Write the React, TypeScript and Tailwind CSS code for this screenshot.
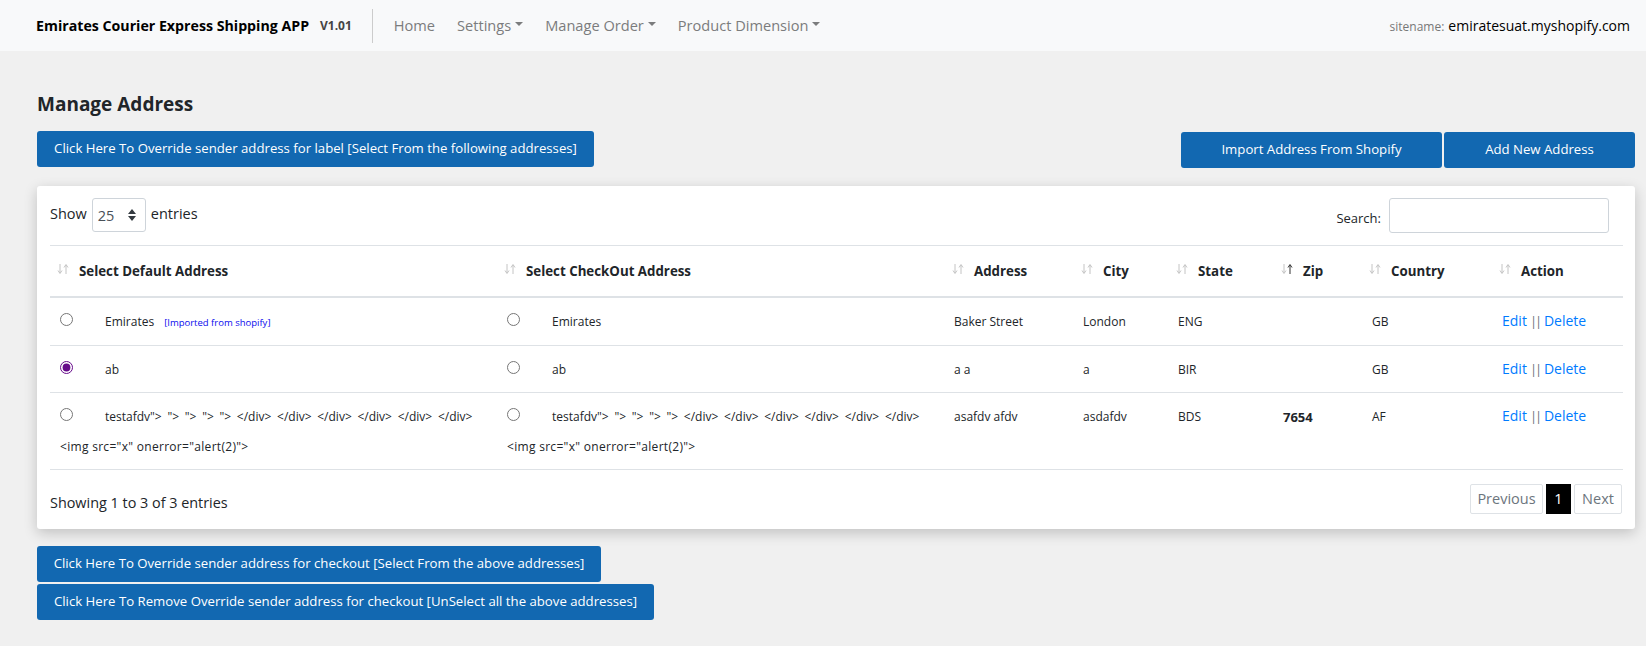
import React from "react";

function Caret() {
  return <span className="ml-[4px] inline-block h-0 w-0 translate-y-[-1px] border-x-[4px] border-t-[4px] border-x-transparent border-t-current" />;
}

function Btn({ children, className = "" }: { children: React.ReactNode; className?: string }) {
  return (
    <button className={"flex h-[36px] items-center justify-center rounded-[3px] bg-[#1268b1] text-[13.2px] text-white " + className}>
      {children}
    </button>
  );
}

function SortIcon({ active = false }: { active?: boolean }) {
  return (
    <svg viewBox="0 0 12 10" fill="none" strokeWidth="1" className="h-[10px] w-[12px] -translate-y-[3px]">
      <path d="M3 0V9M1 6.5 3 9.5 5 6.5" stroke="#c4c4c4" />
      <path d="M9 10V1M7 3.5 9 0.5 11 3.5" stroke={active ? "#333333" : "#c4c4c4"} />
    </svg>
  );
}

function Th({ label, active = false, pad = "pl-[9px]" }: { label: string; active?: boolean; pad?: string }) {
  return (
    <th className={"h-[51px] p-0 pt-[2px] text-left align-middle " + pad}>
      <div className="flex items-center text-[13.3px] font-bold text-[#212529]">
        <span className="w-[14px] shrink-0"><SortIcon active={active} /></span>
        <span className="ml-[8px]">{label}</span>
      </div>
    </th>
  );
}

const testName = `testafdv"> "> "> "> "> </div> </div> </div> </div> </div> </div>`;
const imgLine = `<img src="x" onerror="alert(2)">`;

function NameCell({ name, checked = false, extra, second }: { name: string; checked?: boolean; extra?: boolean; second?: string }) {
  return (
    <td className="px-[11px] pt-[15px] pb-[13px] align-top">
      <div className="flex items-start">
        <input type="radio" readOnly checked={checked} className="-ml-[1px] h-[13px] w-[13px] accent-[#660a8a]" />
        <span className="ml-[32px] leading-[18px] whitespace-nowrap [word-spacing:2.6px]">{name}</span>
        {extra && <span className="mt-px ml-[10px] text-[9.5px] leading-[18px] whitespace-nowrap text-[#0a0aee]">[Imported from shopify]</span>}
      </div>
      {second && <div className="mt-[12px] -ml-[1px] leading-[18px] tracking-[0.3px] whitespace-nowrap">{second}</div>}
    </td>
  );
}

function Row({ name, checked, checked2, extra, second, address, city, state, zip, country }: {
  name: string; checked?: boolean; checked2?: boolean; extra?: boolean; second?: string; address: string; city: string; state: string; zip?: string; country: string;
}) {
  const td = "px-[12px] pt-[15px] align-top leading-[18px]";
  return (
    <tr className="border-b border-[#dee2e6]">
      <NameCell name={name} checked={checked} extra={extra} second={second} />
      <NameCell name={name} checked={checked2} second={second} />
      <td className={td}>{address}</td>
      <td className={td}>{city}</td>
      <td className={td}>{state}</td>
      <td className={td + " text-[13px] font-bold"}>{zip}</td>
      <td className={td}>{country}</td>
      <td className={td}>
        <div className="flex -translate-y-[1px] items-center text-[14px] text-[#007bff]">
          <a>Edit</a>
          <span className="ml-[3px] w-[5px] text-[13px] tracking-[-2px] text-[#6b7280]">||</span>
          <a className="ml-[9px]">Delete</a>
        </div>
      </td>
    </tr>
  );
}

export default function App() {
  return (
    <div className="min-h-[646px] bg-[#f0f0f0] font-['Open_Sans','Noto_Sans',sans-serif] text-[#212529]">
      <nav className="flex h-[51px] items-center bg-[#f8f9fa] pr-[16px] pl-[36px]">
        <span className="w-[274px] text-[14.2px] font-bold whitespace-nowrap text-black">Emirates Courier Express Shipping APP</span>
        <span className="ml-[10px] text-[12px] font-bold text-[#444]">V1.01</span>
        <div className="ml-[20px] h-[34px] w-px bg-[#ccc]" />
        <div className="ml-[21px] flex items-center gap-[22px] text-[14.6px] text-[#7b7c7d]">
          <span>Home</span>
          <span className="flex items-center">Settings<Caret /></span>
          <span className="flex items-center">Manage Order<Caret /></span>
          <span className="flex items-center">Product Dimension<Caret /></span>
        </div>
        <div className="ml-auto flex items-baseline gap-[4px] whitespace-nowrap">
          <span className="text-[12px] text-[#777]">sitename:</span>
          <span className="text-[14px] text-black">emiratesuat.myshopify.com</span>
        </div>
      </nav>

      <main className="pr-[11px] pl-[37px]">
        <h1 className="pt-[38px] text-[19px] leading-[30px] font-bold">Manage Address</h1>
        <div className="mt-[12px] flex items-start justify-between">
          <Btn className="w-[557px]">Click Here To Override sender address for label [Select From the following addresses]</Btn>
          <div className="mt-px flex gap-[2px]">
            <Btn className="w-[261px]">Import Address From Shopify</Btn>
            <Btn className="w-[191px]">Add New Address</Btn>
          </div>
        </div>

        <section className="mt-[18px] rounded-[3px] bg-white pr-[12px] pl-[13px] shadow-[0_4px_14px_rgba(0,0,0,0.2)]">
          <div className="flex h-[59px] items-start justify-between pt-[12px]">
            <div className="flex items-center text-[14.5px] leading-[34px]">
              <span className="-mt-[2px]">Show</span>
              <div className="relative mx-[5px] h-[34px] w-[54px] rounded-[3px] border border-[#ced4da] bg-white">
                <select className="h-full w-full appearance-none pl-[5px] text-[14.5px] text-[#495057] outline-none">
                  <option>25</option>
                </select>
                <svg viewBox="0 0 8 12" className="absolute top-[10px] right-[9px] h-[12px] w-[8px] fill-[#343a40]">
                  <path d="M4 0 8 5H0ZM4 12 0 7H8Z" />
                </svg>
              </div>
              <span className="-mt-[2px]">entries</span>
            </div>
            <div className="mr-[14px] flex items-center gap-[8px] text-[13px]">
              <span className="mt-[6px]">Search:</span>
              <input className="h-[35px] w-[220px] rounded-[3px] border border-[#ced4da] bg-white" />
            </div>
          </div>

          <table className="w-full table-fixed border-collapse text-[12px]">
            <colgroup>
              <col className="w-[447px]" />
              <col className="w-[445px]" />
              <col className="w-[129px]" />
              <col className="w-[95px]" />
              <col className="w-[105px]" />
              <col className="w-[89px]" />
              <col className="w-[130px]" />
              <col className="w-[133px]" />
            </colgroup>
            <thead>
              <tr className="border-t border-b-2 border-t-[#dee2e6] border-b-[#dee2e6]">
                <Th label="Select Default Address" pad="pl-[7px]" />
                <Th label="Select CheckOut Address" pad="pl-[7px]" />
                <Th label="Address" pad="pl-[10px]" />
                <Th label="City" pad="pl-[10px]" />
                <Th label="State" pad="pl-[10px]" />
                <Th label="Zip" active pad="pl-[10px]" />
                <Th label="Country" />
                <Th label="Action" />
              </tr>
            </thead>
            <tbody>
              <Row name="Emirates" extra address="Baker Street" city="London" state="ENG" country="GB" />
              <Row name="ab" checked address="a a" city="a" state="BIR" country="GB" />
              <Row name={testName} second={imgLine} address="asafdv afdv" city="asdafdv" state="BDS" zip="7654" country="AF" />
            </tbody>
          </table>

          <div className="flex h-[59px] items-start justify-between pt-[14px]">
            <span className="mt-[4px] text-[14.4px] leading-[30px]">Showing 1 to 3 of 3 entries</span>
            <div className="mr-[1px] flex h-[30px] items-stretch gap-[3px] text-[14.5px]">
              <span className="flex w-[73px] items-center justify-center rounded-[2px] border border-[#dee2e6] text-[#6c757d]">Previous</span>
              <span className="flex w-[25px] items-center justify-center bg-black text-white">1</span>
              <span className="flex w-[48px] items-center justify-center rounded-[2px] border border-[#dee2e6] text-[#6c757d]">Next</span>
            </div>
          </div>
        </section>

        <div className="mt-[17px] flex flex-col items-start gap-[2px]">
          <Btn className="w-[564px]">Click Here To Override sender address for checkout [Select From the above addresses]</Btn>
          <Btn className="w-[617px]">Click Here To Remove Override sender address for checkout [UnSelect all the above addresses]</Btn>
        </div>
      </main>
    </div>
  );
}
